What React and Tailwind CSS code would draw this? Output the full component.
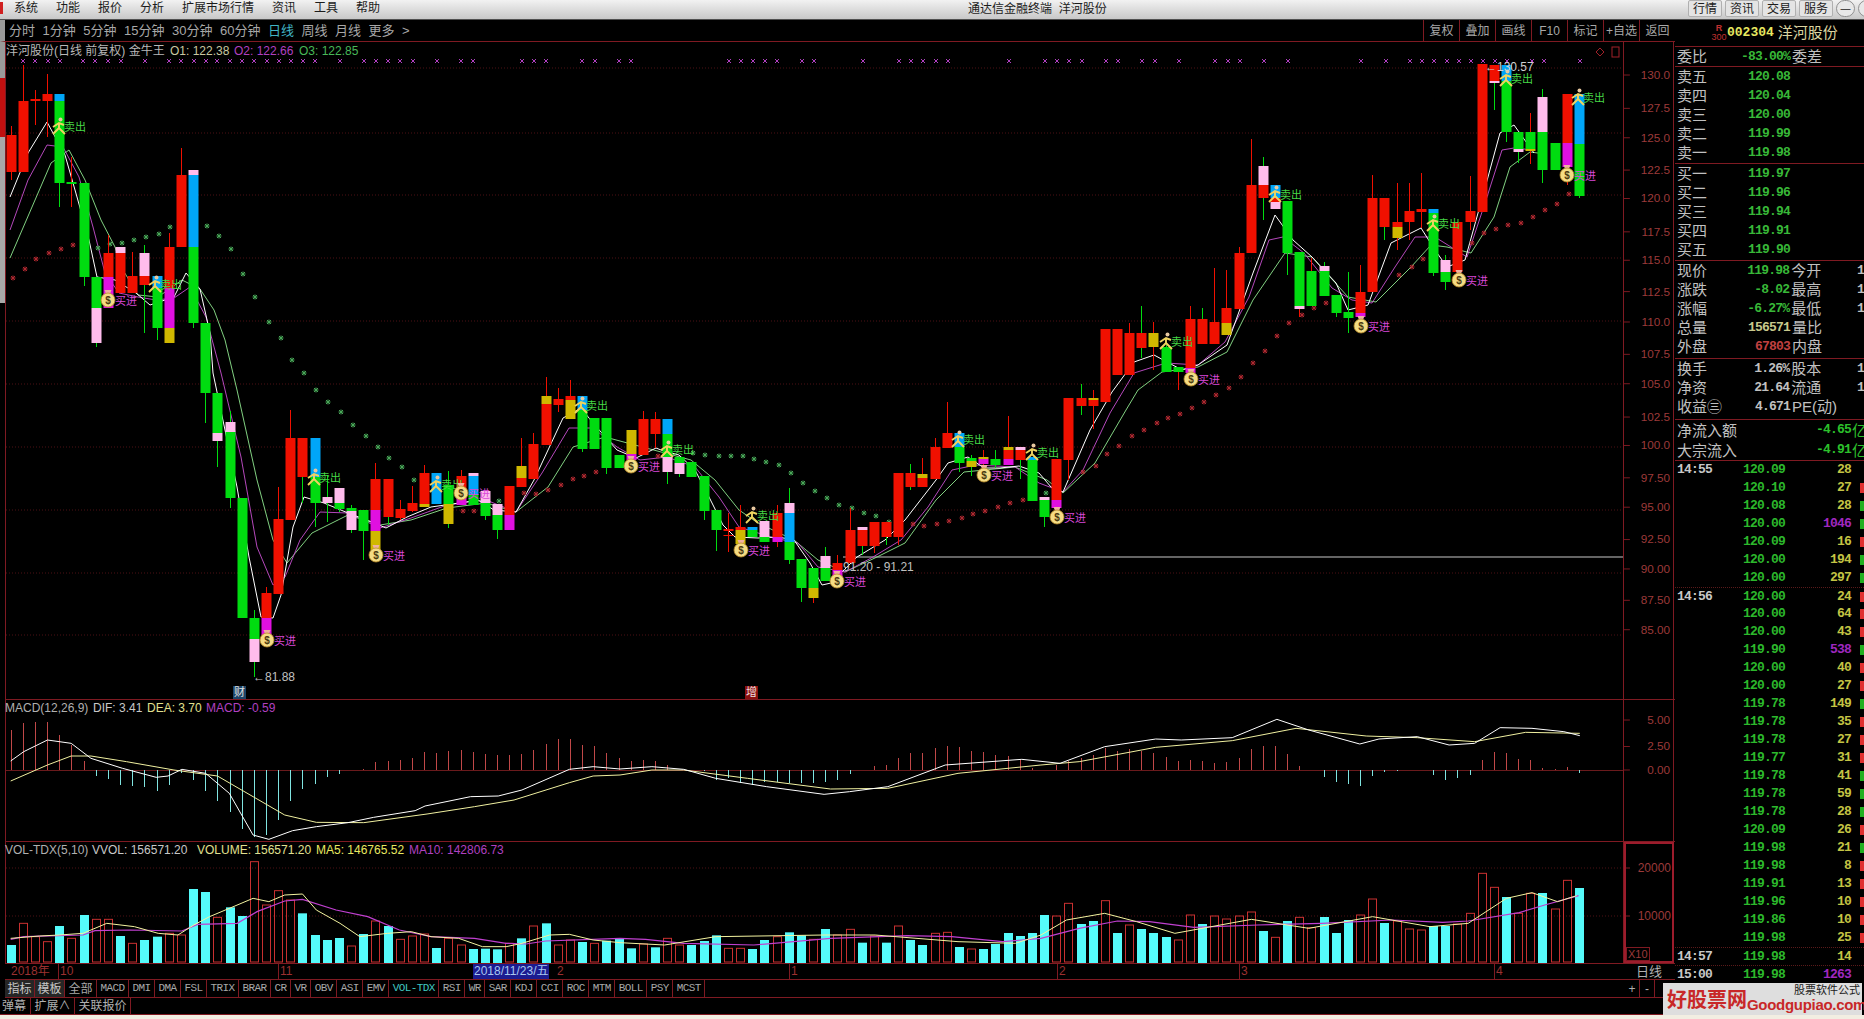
import React from 'react';

const RED_LINE = '#7f1a22';
const COLORS = { r: '#f01000', g: '#00dc10', b: '#00a6f8', p: '#ffbcec', m: '#e010e0', y: '#d0b800' };

const cx = (i) => 10.7 + 12.157 * i;

// [wickTop, wickBottom, wickColour, colour, from, to, colour, from, to ...]
const CANDLES = [
  [126, 180, 'r', 'r', 135, 172],
  [65, 172, 'r', 'r', 101, 172],
  [90, 125, 'r', 'r', 99, 101],
  [74, 137, 'r', 'r', 94, 101],
  [94, 207, 'g', 'b', 94, 101, 'g', 101, 183],
  [157, 207, 'r', 'g', 182, 184],
  [183, 286, 'g', 'g', 183, 277],
  [277, 347, 'g', 'g', 277, 308, 'p', 308, 343],
  [235, 308, 'r', 'r', 253, 277, 'm', 277, 308],
  [247, 293, 'r', 'p', 247, 253, 'r', 253, 293],
  [252, 293, 'r', 'r', 276, 293],
  [245, 333, 'g', 'p', 253, 276, 'r', 276, 285],
  [276, 340, 'g', 'b', 276, 288, 'g', 288, 328],
  [233, 343, 'r', 'r', 247, 288, 'm', 288, 328, 'y', 328, 343],
  [148, 247, 'r', 'r', 175, 247],
  [170, 328, 'g', 'p', 170, 175, 'b', 175, 247, 'g', 247, 323],
  [323, 423, 'g', 'g', 323, 393],
  [393, 467, 'g', 'g', 393, 433, 'p', 433, 441],
  [411, 508, 'g', 'p', 422, 432, 'g', 432, 498],
  [498, 618, 'g', 'g', 498, 618],
  [610, 677, 'g', 'g', 618, 639, 'p', 639, 662],
  [587, 635, 'r', 'r', 593, 618, 'm', 618, 635],
  [487, 594, 'r', 'r', 519, 594],
  [410, 520, 'r', 'r', 438, 520],
  [438, 503, 'g', 'r', 438, 477],
  [438, 527, 'g', 'b', 438, 477, 'g', 477, 503],
  [475, 522, 'g', 'p', 497, 503],
  [488, 512, 'g', 'p', 488, 503, 'g', 503, 509],
  [505, 533, 'g', 'g', 508, 511, 'p', 511, 530],
  [510, 560, 'g', 'g', 510, 531],
  [463, 550, 'r', 'r', 479, 510, 'm', 510, 531, 'y', 531, 550],
  [479, 525, 'g', 'r', 479, 517],
  [500, 520, 'r', 'r', 509, 518],
  [486, 512, 'r', 'r', 503, 511],
  [465, 507, 'r', 'r', 473, 504, 'y', 504, 507],
  [473, 504, 'g', 'b', 473, 504],
  [471, 528, 'g', 'g', 485, 504, 'y', 504, 524],
  [470, 505, 'r', 'r', 476, 498, 'm', 498, 505],
  [473, 505, 'g', 'p', 473, 476, 'b', 476, 495, 'g', 495, 505],
  [491, 520, 'g', 'p', 491, 503, 'g', 503, 516],
  [504, 539, 'g', 'p', 504, 515, 'g', 515, 530],
  [486, 530, 'r', 'r', 486, 515, 'm', 515, 530],
  [438, 487, 'r', 'y', 466, 478, 'r', 478, 487],
  [433, 479, 'r', 'r', 444, 479],
  [377, 445, 'r', 'y', 396, 404, 'r', 404, 445],
  [388, 412, 'r', 'r', 399, 405],
  [380, 419, 'r', 'r', 396, 400, 'y', 400, 419],
  [396, 452, 'g', 'b', 396, 410, 'g', 410, 449],
  [418, 449, 'g', 'g', 418, 449],
  [418, 474, 'g', 'g', 418, 468],
  [455, 468, 'g', 'g', 455, 468],
  [430, 460, 'g', 'y', 430, 454, 'm', 454, 460],
  [411, 455, 'r', 'r', 419, 455],
  [412, 448, 'r', 'r', 419, 434],
  [419, 484, 'g', 'b', 419, 434, 'g', 434, 457, 'p', 457, 472],
  [457, 477, 'g', 'g', 457, 463, 'p', 463, 474],
  [462, 477, 'g', 'g', 462, 477],
  [476, 520, 'g', 'g', 476, 511],
  [510, 551, 'g', 'g', 510, 530],
  [513, 552, 'r', 'r', 529, 531, 'r', 535, 536],
  [505, 544, 'r', 'r', 527, 530, 'y', 530, 544],
  [527, 537, 'g', 'b', 527, 530, 'g', 530, 537],
  [521, 542, 'g', 'p', 521, 537, 'g', 537, 542],
  [505, 547, 'r', 'r', 513, 537, 'm', 537, 542],
  [488, 564, 'g', 'p', 503, 513, 'b', 513, 542, 'g', 542, 560],
  [559, 602, 'g', 'g', 559, 588],
  [568, 603, 'r', 'g', 568, 588, 'y', 588, 598],
  [547, 581, 'g', 'p', 556, 568, 'g', 568, 581],
  [555, 578, 'r', 'r', 563, 570, 'm', 570, 578],
  [508, 563, 'r', 'r', 530, 563],
  [527, 555, 'g', 'p', 527, 530, 'r', 530, 546],
  [522, 553, 'r', 'r', 522, 546],
  [522, 545, 'g', 'r', 522, 537],
  [473, 545, 'r', 'r', 473, 537],
  [464, 490, 'g', 'r', 473, 487],
  [458, 487, 'r', 'y', 474, 478, 'r', 478, 487],
  [438, 479, 'r', 'r', 447, 479],
  [402, 448, 'r', 'r', 433, 448],
  [433, 472, 'g', 'b', 433, 447, 'g', 447, 463],
  [455, 476, 'g', 'g', 458, 461, 'y', 461, 467],
  [450, 472, 'r', 'y', 457, 459, 'm', 459, 464],
  [450, 468, 'g', 'g', 459, 465],
  [416, 465, 'r', 'y', 447, 450, 'r', 450, 459, 'm', 459, 465],
  [447, 479, 'g', 'p', 447, 450, 'r', 450, 460],
  [457, 501, 'g', 'b', 457, 460, 'g', 460, 501],
  [497, 527, 'g', 'p', 497, 500, 'g', 500, 517],
  [459, 508, 'r', 'r', 459, 500, 'm', 500, 508],
  [398, 480, 'r', 'r', 398, 460],
  [384, 415, 'g', 'r', 398, 406],
  [390, 429, 'r', 'y', 398, 400, 'r', 400, 406],
  [329, 402, 'r', 'r', 329, 402],
  [329, 375, 'r', 'r', 329, 375],
  [323, 375, 'r', 'r', 333, 375],
  [306, 358, 'g', 'r', 333, 348],
  [322, 370, 'r', 'y', 333, 347],
  [345, 372, 'g', 'g', 347, 372],
  [367, 390, 'r', 'g', 367, 372],
  [306, 373, 'r', 'r', 319, 368, 'm', 368, 373],
  [308, 344, 'g', 'r', 319, 344],
  [268, 344, 'r', 'r', 322, 344],
  [270, 335, 'r', 'r', 308, 323, 'y', 323, 335],
  [247, 309, 'r', 'r', 253, 309],
  [139, 253, 'r', 'r', 185, 253],
  [157, 220, 'g', 'p', 166, 185, 'r', 185, 198],
  [185, 209, 'g', 'b', 185, 198, 'r', 198, 202, 'p', 202, 209],
  [201, 275, 'g', 'g', 201, 253],
  [252, 317, 'r', 'g', 252, 306, 'p', 306, 309],
  [258, 306, 'r', 'g', 271, 306],
  [262, 296, 'g', 'p', 266, 271, 'g', 271, 296],
  [295, 317, 'g', 'g', 295, 313],
  [272, 333, 'g', 'g', 312, 318],
  [265, 317, 'r', 'r', 292, 313, 'm', 313, 317],
  [175, 292, 'r', 'r', 198, 292],
  [198, 240, 'g', 'r', 198, 227],
  [183, 250, 'r', 'r', 222, 227, 'y', 227, 238],
  [183, 240, 'r', 'r', 211, 222],
  [173, 228, 'r', 'r', 209, 212],
  [209, 276, 'g', 'b', 209, 213, 'g', 213, 273],
  [255, 290, 'g', 'p', 260, 272, 'g', 272, 282],
  [222, 272, 'r', 'r', 222, 272],
  [176, 230, 'r', 'r', 211, 222],
  [64, 212, 'r', 'r', 64, 212],
  [65, 110, 'g', 'r', 65, 81, 'p', 81, 83],
  [65, 142, 'g', 'b', 65, 81, 'g', 81, 132],
  [132, 163, 'g', 'g', 132, 149, 'p', 149, 152],
  [113, 164, 'r', 'g', 132, 149, 'y', 149, 151],
  [89, 183, 'g', 'p', 97, 132, 'g', 132, 170],
  [143, 170, 'g', 'g', 143, 170],
  [94, 185, 'r', 'r', 94, 143, 'm', 143, 167],
  [94, 198, 'g', 'b', 94, 144, 'g', 144, 196],
];

const MA_WHITE = [[10,197],[28,153],[47,122],[53,133],[65,155],[77,197],[89,240],[97,277],[115,280],[136,293],[150,305],[174,297],[186,273],[200,289],[210,333],[213,373],[237,487],[249,557],[261,617],[273,618],[281,595],[293,527],[304,497],[324,503],[348,513],[372,522],[386,528],[407,517],[431,507],[459,503],[478,500],[494,510],[516,512],[534,480],[563,418],[581,408],[593,423],[617,450],[636,458],[656,448],[661,450],[679,455],[695,470],[709,497],[723,525],[735,537],[758,538],[778,537],[794,540],[810,563],[822,585],[831,583],[857,557],[885,540],[905,520],[936,480],[948,463],[968,457],[984,468],[1000,468],[1019,466],[1039,473],[1051,487],[1063,492],[1090,430],[1112,392],[1134,362],[1154,355],[1182,370],[1198,365],[1227,345],[1253,273],[1275,215],[1293,240],[1312,257],[1336,283],[1348,310],[1368,305],[1391,243],[1421,228],[1435,250],[1447,267],[1465,260],[1488,177],[1500,133],[1514,125],[1534,153]];
const MA_PURPLE = [[10,230],[28,180],[47,145],[63,147],[79,177],[93,227],[105,273],[119,293],[138,297],[156,300],[174,298],[190,287],[206,317],[221,373],[241,457],[257,547],[273,585],[285,577],[300,540],[320,512],[348,513],[380,528],[411,518],[447,505],[486,500],[516,512],[542,473],[569,428],[593,428],[617,447],[640,460],[667,457],[695,467],[719,497],[739,527],[774,538],[798,543],[818,567],[845,572],[873,557],[901,540],[928,507],[952,470],[976,465],[1015,467],[1039,483],[1063,492],[1083,470],[1110,413],[1134,373],[1166,363],[1198,365],[1225,342],[1249,297],[1269,240],[1283,237],[1304,253],[1332,288],[1352,300],[1372,303],[1395,267],[1415,237],[1435,237],[1467,257],[1486,200],[1502,150],[1514,148],[1534,150]];
const MA_GREEN = [[10,258],[51,163],[69,150],[85,180],[101,220],[115,247],[123,270],[138,295],[158,297],[182,280],[200,289],[214,310],[225,340],[237,390],[257,480],[273,540],[287,563],[312,533],[348,515],[380,525],[411,520],[447,508],[486,503],[516,512],[548,487],[573,447],[605,437],[691,460],[715,480],[739,510],[758,523],[794,540],[818,560],[845,572],[877,557],[905,543],[936,500],[964,472],[1015,467],[1047,480],[1063,493],[1095,463],[1126,410],[1138,390],[1162,372],[1198,367],[1227,352],[1253,300],[1285,253],[1312,257],[1348,297],[1376,302],[1411,267],[1431,245],[1447,247],[1471,253],[1494,217],[1510,167],[1530,152],[1538,153]];

const STARS_RED = [[13,278],[25,269],[36,259],[49,253],[61,249],[73,245],[463,511],[474,511],[524,493],[536,494],[548,490],[561,485],[573,479],[584,476],[596,472],[658,456],[913,524],[924,526],[937,524],[949,521],[962,518],[973,514],[985,511],[998,507],[1010,503],[1023,500],[1083,472],[1096,466],[1107,454],[1119,446],[1132,436],[1144,430],[1157,423],[1168,418],[1180,414],[1192,408],[1204,402],[1216,395],[1229,388],[1241,377],[1253,363],[1265,351],[1277,336],[1289,323],[1302,315],[1314,308],[1326,303],[1399,275],[1412,267],[1423,259],[1472,243],[1484,233],[1496,229],[1508,225],[1521,223],[1533,217],[1545,210],[1557,204],[1569,194]];
const STARS_GREEN = [[98,248],[110,244],[122,243],[134,240],[146,237],[159,234],[170,227],[207,226],[219,236],[231,249],[243,274],[255,297],[269,322],[281,338],[292,360],[304,373],[316,390],[328,402],[341,412],[353,425],[366,436],[378,447],[389,458],[402,467],[414,480],[499,501],[693,453],[705,455],[719,456],[731,456],[743,456],[754,459],[766,462],[779,465],[791,473],[803,483],[815,491],[827,498],[839,505],[852,508],[864,513],[876,516],[889,522],[1046,493]];

const CROSS_X = [23,35,48,60,83,95,108,121,145,169,181,194,206,217,230,242,254,267,279,291,303,315,340,364,376,388,400,413,437,461,473,522,534,546,582,595,619,631,729,741,753,765,777,802,814,863,899,911,923,936,948,1009,1045,1057,1069,1082,1106,1118,1142,1155,1179,1215,1228,1240,1264,1288,1361,1386,1410,1422,1434,1447,1459,1471,1483,1495,1507,1532,1544,1580];

const SELL = [[60,126],[156,284],[315,477],[437,484],[582,405],[668,449],[753,515],[959,439],[1033,452],[1167,341],[1276,194],[1434,223],[1507,78],[1579,97]];
const BUY = [[108,300],[267,640],[376,555],[461,493],[631,466],[741,550],[837,581],[984,475],[1057,517],[1191,379],[1361,326],[1459,280],[1567,175]];

const MAIN_AXIS = [[130,'130.0',69],[127.5,'127.5',103],[125,'125.0',133],[122.5,'122.5',166],[120,'120.0',195],[117.5,'117.5',229],[115,'115.0',258],[112.5,'112.5',290],[110,'110.0',321],[107.5,'107.5',354],[105,'105.0',384],[102.5,'102.5',418],[100,'100.0',447],[97.5,'97.50',480],[95,'95.00',510],[92.5,'92.50',543],[90,'90.00',573],[87.5,'87.50',605],[85,'85.00',635]];
const MAIN_GRID = [68,133,195,258,321,384,447,510,573,635];

// macd histogram, height above (+) or below (-) the zero line
const HIST = [40,47,48,48,35,25,9,-6,-9,-15,-16,-17,-21,-15,-3,-10,-21,-31,-42,-59,-67,-65,-50,-31,-19,-14,-7,-4,0,1,8,9,10,12,18,17,19,20,18,16,15,15,16,20,26,31,31,25,24,17,12,9,10,9,5,0,0,-1,-10,-8,-13,-15,-12,-12,-13,-13,-13,-12,-10,-4,0,4,5,12,17,17,22,24,23,19,18,15,14,10,2,0,5,9,12,15,22,19,21,19,17,13,9,10,9,7,8,12,21,24,24,16,4,0,-7,-12,-14,-16,-6,-2,-1,0,0,-5,-10,-8,-5,10,18,17,11,10,2,1,3,-3];

const fromLeft = (pts) => pts.map(([x, y]) => [x / 2.529, 690 + y / 3]);
const fromRight = (pts) => pts.map(([x, y]) => [620 + x / 1.568, 690 + y / 3]);

const DIF = [...fromLeft([[27,213],[60,185],[120,150],[180,160],[230,205],[310,235],[395,262],[425,258],[460,238],[520,250],[580,310],[640,435],[680,448],[740,422],[800,410],[880,398],[945,382],[1050,362],[1075,348],[1190,320],[1260,318],[1320,300],[1440,238],[1500,230],[1568,237]]), ...fromRight([[50,230],[100,238],[150,265],[230,290],[320,313],[360,305],[420,290],[510,225],[630,208],[690,220],[760,170],[840,147],[880,150],[960,143],[1030,88],[1080,120],[1160,162],[1190,147],[1250,140],[1300,165],[1340,160],[1380,113],[1430,115],[1480,125],[1505,137]])];
const DEA = [...fromLeft([[27,273],[120,225],[180,198],[230,198],[320,215],[440,240],[550,258],[640,320],[720,375],[800,397],[920,398],[1080,372],[1200,350],[1300,330],[1440,278],[1500,258],[1568,255]]), ...fromRight([[50,240],[100,240],[200,265],[330,297],[420,295],[530,250],[660,225],[720,215],[840,172],[960,152],[1060,115],[1170,138],[1250,143],[1340,155],[1420,127],[1505,130]])];

// volume bars: 1 = hollow red, 0 = cyan, second number is the top in crop rows
const VOL = [[0,765],[1,700],[1,740],[1,755],[0,708],[1,745],[0,675],[1,688],[1,688],[0,738],[1,760],[0,750],[0,740],[1,730],[1,735],[0,597],[0,606],[1,682],[0,652],[0,678],[1,515],[1,645],[1,602],[1,630],[0,670],[0,735],[0,750],[0,744],[1,768],[0,732],[1,693],[0,708],[1,748],[1,738],[1,732],[0,774],[1,745],[1,765],[0,777],[0,776],[0,778],[1,760],[0,745],[1,708],[0,700],[1,765],[1,750],[0,756],[1,760],[0,752],[0,745],[0,775],[1,762],[0,772],[1,745],[1,765],[0,765],[0,753],[0,736],[1,775],[1,775],[0,777],[0,750],[1,740],[0,727],[0,736],[1,748],[0,717],[1,735],[1,718],[0,758],[1,738],[0,758],[1,708],[0,750],[0,765],[1,730],[1,727],[0,771],[1,777],[0,777],[0,762],[0,729],[0,738],[0,729],[0,675],[1,678],[1,640],[0,702],[0,693],[1,632],[0,729],[1,705],[0,717],[0,729],[0,741],[1,750],[1,675],[0,702],[1,678],[1,687],[1,678],[1,666],[0,723],[1,742],[0,693],[1,682],[1,713],[0,681],[0,729],[0,690],[1,675],[1,627],[0,699],[1,693],[1,717],[1,720],[0,708],[0,708],[1,702],[1,670],[1,550],[1,592],[0,621],[1,670],[1,610],[0,609],[1,657],[1,571],[0,594]];

const VOL_MA5 = [...fromLeft([[27,745],[100,738],[150,735],[210,730],[270,700],[340,710],[400,730],[450,735],[490,705],[530,680],[640,625],[680,635],[720,615],[765,612],[800,660],[860,700],[910,740],[980,730],[1040,725],[1090,740],[1160,745],[1220,770],[1280,770],[1320,760],[1390,735],[1440,733],[1500,750],[1568,758]]), ...fromRight([[70,765],[150,740],[320,735],[400,735],[530,755],[620,760],[660,735],[700,690],[760,670],[810,695],[870,730],[990,688],[1080,715],[1180,680],[1270,710],[1330,700],[1390,625],[1430,608],[1470,635],[1500,617]])];
const VOL_MA10 = [...fromLeft([[27,748],[60,740],[210,735],[240,722],[330,720],[460,723],[500,703],[600,700],[650,665],[720,633],[765,628],[850,660],[930,680],[1010,720],[1090,740],[1200,745],[1280,760],[1330,762],[1380,753],[1568,745]]), ...fromRight([[40,748],[100,760],[210,765],[330,745],[450,737],[520,740],[600,755],[660,745],[720,715],[780,693],[830,695],[900,712],[1000,705],[1100,700],[1210,690],[1290,697],[1330,693],[1410,668],[1450,645],[1503,617]])];

const TRADES = [
  ['14:55','120.09','28','y',''],['','120.10','27','y','r'],['','120.08','28','y','g'],['','120.00','1046','m','g'],['','120.09','16','y','r'],['','120.00','194','y','g'],['','120.00','297','y','g'],
  ['14:56','120.00','24','y','r'],['','120.00','64','y','r'],['','120.00','43','y','r'],['','119.90','538','m','g'],['','120.00','40','y','r'],['','120.00','27','y','r'],['','119.78','149','y','g'],['','119.78','35','y','r'],['','119.78','27','y','r'],['','119.77','31','y','r'],['','119.78','41','y','g'],['','119.78','59','y','g'],['','119.78','28','y','g'],['','120.09','26','y','r'],['','119.98','21','y','g'],['','119.98','8','y','r'],['','119.91','13','y','r'],['','119.96','10','y','r'],['','119.86','10','y','r'],['','119.98','25','y','r'],
  ['14:57','119.98','14','y',''],['15:00','119.98','1263','m',''],
];

const toPoints = (pts) => pts.map((p) => p.join(',')).join(' ');

const Candle = ({ data, i }) => {
  const x = Math.round(cx(i));
  const [top, bottom, wick, ...rest] = data;
  const bodies = [];
  for (let k = 0; k < rest.length; k += 3) bodies.push(rest.slice(k, k + 3));
  return (
    <g>
      <line x1={x + 0.5} x2={x + 0.5} y1={top} y2={bottom} stroke={COLORS[wick]} />
      {bodies.map(([c, a, b], n) => (
        <rect key={n} x={x - 4.5} y={a} width={10} height={b - a} fill={COLORS[c]} />
      ))}
    </g>
  );
};

const Star = ({ x, y, color }) => (
  <path d={`M${x - 2.5} ${y}H${x + 2.5}M${x} ${y - 2.5}V${y + 2.5}M${x - 2} ${y - 2}L${x + 2} ${y + 2}M${x + 2} ${y - 2}L${x - 2} ${y + 2}`} stroke={color} strokeWidth="1" />
);

const SellMark = ({ x, y }) => (
  <g>
    <path d={`M${x - 7} ${y + 1}L${x - 1} ${y - 3}L${x + 4} ${y - 1}M${x - 1} ${y - 3}L${x - 1} ${y + 2}L${x - 7} ${y + 8}M${x - 1} ${y + 2}L${x + 5} ${y + 8}`} stroke="#f0d460" strokeWidth="1.9" fill="none" />
    <circle cx={x + 0.5} cy={y - 6.5} r="2" fill="#e8c8a0" />
    <text x={x + 4} y={y + 5} fontSize="11" fill="#46d846">卖出</text>
  </g>
);

const BuyMark = ({ x, y }) => (
  <g>
    <path d={`M${x - 3.5} ${y - 10}L${x + 3.5} ${y - 10}L${x + 1.5} ${y - 5}L${x - 1.5} ${y - 5}Z`} fill="#f0b0a0" />
    <circle cx={x} cy={y} r="7" fill="#f4dc84" stroke="#b88a28" strokeWidth="0.8" />
    <text x={x} y={y + 3.5} fontSize="10" fontWeight="700" textAnchor="middle" fill="#4a3a10">$</text>
    <text x={x + 7} y={y + 5} fontSize="11" fill="#d848d8">买进</text>
  </g>
);

const AxisLabel = ({ y, text }) => (
  <g>
    <line x1="1624" x2="1630" y1={y} y2={y} stroke={RED_LINE} />
    <text x="1671" y={y + 4} fontSize="12" textAnchor="end" fill="#9c3a3a">{text}</text>
  </g>
);

const GridLine = ({ y }) => (
  <line x1="6" x2="1623" y1={y} y2={y} stroke="#4c1014" strokeDasharray="1 2" />
);

const MainPlot = () => (
  <svg width="1618" height="657" viewBox="6 42 1618 657" className="block">
    {MAIN_GRID.map((y) => <GridLine key={y} y={y} />)}
    {CROSS_X.map((x) => (
      <path key={x} d={`M${x - 2} 59L${x + 2} 63M${x + 2} 59L${x - 2} 63`} stroke="#b040c0" fill="none" />
    ))}
    <line x1="843" x2="1623" y1="557" y2="557" stroke="#c8c8c8" />
    <polyline points={toPoints(MA_GREEN)} fill="none" stroke="#90e890" strokeWidth="0.9" />
    <polyline points={toPoints(MA_PURPLE)} fill="none" stroke="#c850d0" strokeWidth="0.9" />
    <polyline points={toPoints(MA_WHITE)} fill="none" stroke="#ffffff" />
    {STARS_RED.map(([x, y]) => <Star key={x} x={x} y={y} color="#b02830" />)}
    {STARS_GREEN.map(([x, y]) => <Star key={x} x={x} y={y} color="#48a858" />)}
    {CANDLES.map((c, i) => <Candle key={i} data={c} i={i} />)}
    {SELL.map(([x, y]) => <SellMark key={x} x={x} y={y} />)}
    {BUY.map(([x, y]) => <BuyMark key={x} x={x} y={y} />)}
    <text x="253" y="681" fontSize="12" fill="#c0c0c0">←81.88</text>
    <text x="1485" y="71" fontSize="12" fill="#d0d0d0">←130.57</text>
    <text x="843" y="571" fontSize="12" fill="#c0c0c0">91.20 - 91.21</text>
    <path d="M1600 48L1604 52L1600 56L1596 52Z" fill="none" stroke="#a02028" />
    <rect x="1612" y="47" width="7" height="10" fill="none" stroke="#a02028" />
  </svg>
);

const MacdPlot = () => (
  <svg width="1618" height="141" viewBox="6 700 1618 141" className="block">
    <line x1="6" x2="1623" y1="770.5" y2="770.5" stroke="#6a1a1c" />
    {HIST.map((h, i) => {
      const x = Math.round(cx(i)) + 0.5;
      return <line key={i} x1={x} x2={x} y1="770" y2={770 - h} stroke={h > 0 ? '#c04848' : '#80e4e0'} />;
    })}
    <polyline points={toPoints(DEA)} fill="none" stroke="#f0f0a0" />
    <polyline points={toPoints(DIF)} fill="none" stroke="#ffffff" />
  </svg>
);

const VolPlot = () => (
  <svg width="1618" height="121" viewBox="6 842 1618 121" className="block">
    <GridLine y={868} />
    <GridLine y={916} />
    {VOL.map(([up, z], i) => {
      const x = Math.round(cx(i));
      const top = 690 + z / 3;
      return up ? (
        <rect key={i} x={x - 3.5} y={top} width="8" height={962 - top} fill="none" stroke="#c83030" />
      ) : (
        <rect key={i} x={x - 4} y={top} width="9" height={963 - top} fill="#55fbfb" />
      );
    })}
    <polyline points={toPoints(VOL_MA10)} fill="none" stroke="#c040d0" strokeWidth="1.2" />
    <polyline points={toPoints(VOL_MA5)} fill="none" stroke="#f4f4a0" />
  </svg>
);

const Legend = ({ items }) => (
  <div className="absolute left-0 top-0 flex whitespace-nowrap">
    {items.map(([text, color, left]) => (
      <span key={text} className={`absolute ${color}`} style={{ left }}>{text}</span>
    ))}
  </div>
);

const Toolbar = () => {
  const left = ['分时', '1分钟', '5分钟', '15分钟', '30分钟', '60分钟', '日线', '周线', '月线', '更多', '>'];
  const right = ['复权', '叠加', '画线', 'F10', '标记', '+自选', '返回'];
  return (
    <div className="flex h-[22px] items-center justify-between border-b border-l-[5px] border-b-[#7f1a22] border-l-[#9a9a9a] text-[13px] text-[#a8a8a8]">
      <div className="flex items-center gap-[7.5px] pl-[4px]">
        {left.map((t) => (
          <span key={t} className={t === '日线' ? 'text-[#40b4c4]' : ''}>{t}</span>
        ))}
      </div>
      <div className="flex h-full">
        {right.map((t) => (
          <span key={t} className="flex w-[36px] items-center justify-center border-l border-[#7f1a22] text-[12px]">{t}</span>
        ))}
      </div>
    </div>
  );
};

const Tabs = () => {
  const tabs = ['MACD', 'DMI', 'DMA', 'FSL', 'TRIX', 'BRAR', 'CR', 'VR', 'OBV', 'ASI', 'EMV', 'VOL-TDX', 'RSI', 'WR', 'SAR', 'KDJ', 'CCI', 'ROC', 'MTM', 'BOLL', 'PSY', 'MCST'];
  return (
    <div className="ml-[5px] flex h-[18px] border-b border-[#7f1a22] text-[#a8a8a8]">
      {['指标', '模板'].map((t) => (
        <span key={t} className="flex w-[30px] items-center justify-center border-r border-[#7f1a22] bg-[#262626] text-[12px] text-[#c8c8c8]">{t}</span>
      ))}
      <span className="flex w-[32px] items-center justify-center border-r border-[#7f1a22] text-[12px]">全部</span>
      {tabs.map((t) => (
        <span
          key={t}
          className={`flex items-center border-r border-[#7f1a22] px-[3.5px] font-['Liberation_Mono',monospace] text-[11px] tracking-[-0.6px] ${t === 'VOL-TDX' ? 'text-[#40c8c0]' : ''}`}
        >
          {t}
        </span>
      ))}
    </div>
  );
};

const MonoBold = "font-['Liberation_Mono','Noto_Sans_CJK_SC',monospace] font-bold text-[13px] tracking-[-0.8px]";

const Quote = ({ label, value, color = 'text-[#38b838]', label2, extra }) => (
  <div className="flex h-[19px] items-center whitespace-nowrap">
    <div className="flex w-[115px] items-center justify-between pl-[2px]">
      <span className="text-[15px] leading-none text-[#c0c0c0]">{label}</span>
      <span className={`${MonoBold} ${color}`}>{value}</span>
    </div>
    {label2 && <span className="w-[68px] pl-[2px] text-[15px] leading-none text-[#c0c0c0]">{label2}</span>}
    {extra && <span className={`${MonoBold} text-[#c0c0c0]`}>{extra}</span>}
  </div>
);

const TradeRow = ({ row, dotted }) => {
  const [time, price, vol, kind, side] = row;
  return (
    <div className={`flex h-[18px] items-center whitespace-nowrap ${MonoBold} ${dotted ? 'border-t border-dotted border-[#5a1a1a]' : ''}`}>
      <span className="w-[68px] pl-[2px] text-[#c8c8c8]">{time}</span>
      <span className="w-[50px] text-[#2cb82c]">{price}</span>
      <span className={`w-[58px] text-right ${kind === 'm' ? 'text-[#a028c0]' : 'text-[#c4c444]'}`}>{vol}</span>
      {side && <span className={`ml-[9px] h-[10px] w-[4px] ${side === 'r' ? 'bg-[#e03030]' : 'bg-[#20b020]'}`} />}
    </div>
  );
};

const Section = ({ className, children }) => (
  <div className={`border-b border-[#7f1a22] ${className}`}>{children}</div>
);

const QuotePanel = () => (
  <div className="w-[189px] overflow-hidden bg-black">
    <Section className="flex h-[27px] items-center pl-[36px]">
      <span className="flex w-[16px] flex-col items-center text-[9px] leading-[9px] text-[#c03030]">
        <b>R</b>
        <span>300</span>
      </span>
      <span className="font-['Liberation_Mono',monospace] text-[13px] font-bold text-[#e8e860]">002304</span>
      <span className="ml-[4px] text-[15px] text-[#dcd4a0]">洋河股份</span>
    </Section>
    <Section className="h-[20px]">
      <Quote label="委比" value="-83.00%" label2="委差" />
    </Section>
    <Section className="h-[97px]">
      {[['卖五', '120.08'], ['卖四', '120.04'], ['卖三', '120.00'], ['卖二', '119.99'], ['卖一', '119.98']].map(([l, v]) => (
        <Quote key={l} label={l} value={v} />
      ))}
    </Section>
    <Section className="h-[97px]">
      {[['买一', '119.97'], ['买二', '119.96'], ['买三', '119.94'], ['买四', '119.91'], ['买五', '119.90']].map(([l, v]) => (
        <Quote key={l} label={l} value={v} />
      ))}
    </Section>
    <Section className="h-[98px]">
      <Quote label="现价" value="119.98" label2="今开" extra="1" />
      <Quote label="涨跌" value="-8.02" label2="最高" extra="1" />
      <Quote label="涨幅" value="-6.27%" label2="最低" extra="1" />
      <Quote label="总量" value="156571" color="text-[#c8c88c]" label2="量比" />
      <Quote label="外盘" value="67803" color="text-[#c04040]" label2="内盘" />
    </Section>
    <Section className="h-[61px]">
      <Quote label="换手" value="1.26%" color="text-[#c0c0c0]" label2="股本" extra="1" />
      <Quote label="净资" value="21.64" color="text-[#c0c0c0]" label2="流通" extra="1" />
      <Quote label="收益㊂" value="4.671" color="text-[#c0c0c0]" label2="PE(动)" />
    </Section>
    <Section className="h-[41px] text-[15px] text-[#c0c0c0]">
      {[['净流入额', '-4.65'], ['大宗流入', '-4.91']].map(([l, v]) => (
        <div key={l} className="flex h-[20px] items-center justify-between whitespace-nowrap pl-[2px]">
          <span className="leading-none">{l}</span>
          <span className="flex w-[48px] items-center">
            <span className={`${MonoBold} text-[#2cc02c]`}>{v}</span>
            <span className="ml-[1px] leading-none text-[#2cc02c]">亿</span>
          </span>
        </div>
      ))}
    </Section>
    <div>
      {TRADES.map((row, i) => (
        <TradeRow key={i} row={row} dotted={i === 7 || i === 27 || i === 28} />
      ))}
    </div>
  </div>
);

// sliver of the window behind, visible along the left edge
const LeftStrip = () => (
  <div className="flex w-[5px] flex-col">
    <div className="h-[36px] bg-[#9a9a9a]" />
    <div className="h-[59px] bg-[#c01010]" />
    <div className="h-[166px] bg-[#a8a8a8]" />
    <div className="flex-1 bg-black" />
  </div>
);

export default function App() {
  return (
    <div className="relative flex h-[1019px] w-[1864px] flex-col overflow-hidden bg-black font-['Liberation_Sans','Noto_Sans_CJK_SC',sans-serif]">
      {/* menu bar */}
      <div className="relative flex h-[20px] shrink-0 items-center border-b border-[#505050] bg-gradient-to-b from-[#f2f2f2] to-[#c8c8c8] pb-[4px] text-[12px] text-[#1c1c1c]">
        <span className="mr-[11px] h-[12px] w-[3px] bg-[#d02020]" />
        <div className="flex gap-[18px]">
          {['系统', '功能', '报价', '分析', '扩展市场行情', '资讯', '工具', '帮助'].map((t) => <span key={t}>{t}</span>)}
        </div>
        <span className="absolute left-[968px] top-0 whitespace-pre">通达信金融终端  洋河股份</span>
        <div className="absolute left-[1688px] top-0 flex items-center gap-[3px]">
          {['行情', '资讯', '交易', '服务'].map((t) => (
            <span key={t} className="flex h-[17px] w-[34px] items-center justify-center rounded-[2px] border border-[#b0b0b0] bg-[#e4e4e4]">{t}</span>
          ))}
          <span className="flex h-[17px] w-[19px] items-center justify-center rounded-full border border-[#909090] bg-[#e8e8e8] text-[10px]">—</span>
          <span className="h-[17px] w-[19px] rounded-full border border-[#909090] bg-[#e8e8e8]" />
        </div>
      </div>

      <div className="flex h-[995px] shrink-0">
        <div className="flex w-[1675px] flex-col">
          <Toolbar />

          <div className="flex h-[922px]">
            <LeftStrip />
            <div className="w-[1670px] border-l border-[#7f1a22]">
              {/* price pane */}
              <div className="flex h-[658px] border-b border-[#7f1a22]">
                <div className="relative w-[1618px] border-r border-[#7f1a22] text-[12px] leading-[18px]">
                  <MainPlot />
                  <Legend
                    items={[
                      ['洋河股份(日线 前复权) 金牛王', 'text-[#b8b8b8]', 0],
                      ['O1: 122.38', 'text-[#c8c8a0]', 164],
                      ['O2: 122.66', 'text-[#b040c0]', 228],
                      ['O3: 122.85', 'text-[#48b858]', 293],
                    ]}
                  />
                  <span className="absolute left-[227px] top-[644px] bg-[#1c4468] px-[1px] text-[11px] leading-[13px] text-[#e0e0e0]">财</span>
                  <span className="absolute left-[739px] top-[644px] bg-[#8c1010] px-[1px] text-[11px] leading-[13px] text-[#f0e0e0]">增</span>
                </div>
                <svg width="50" height="657" viewBox="1624 42 50 657" className="block border-r border-[#7f1a22]">
                  {MAIN_AXIS.map(([p, t, y]) => <AxisLabel key={p} y={y} text={t} />)}
                </svg>
              </div>

              {/* macd pane */}
              <div className="flex h-[142px] border-b border-[#7f1a22]">
                <div className="relative w-[1618px] border-r border-[#7f1a22] text-[12px] leading-[16px]">
                  <MacdPlot />
                  <Legend
                    items={[
                      ['MACD(12,26,9)', 'text-[#b0b0b0]', -1],
                      ['DIF: 3.41', 'text-[#c8c8c8]', 87],
                      ['DEA: 3.70', 'text-[#e0e090]', 141],
                      ['MACD: -0.59', 'text-[#b040c0]', 200],
                    ]}
                  />
                </div>
                <svg width="50" height="141" viewBox="1624 700 50 141" className="block border-r border-[#7f1a22]">
                  <AxisLabel y={719} text="5.00" />
                  <AxisLabel y={746} text="2.50" />
                  <AxisLabel y={770} text="0.00" />
                </svg>
              </div>

              {/* volume pane */}
              <div className="flex h-[122px] border-b border-[#7f1a22]">
                <div className="relative w-[1618px] border-r border-[#7f1a22] text-[12px] leading-[16px]">
                  <VolPlot />
                  <Legend
                    items={[
                      ['VOL-TDX(5,10)', 'text-[#b0b0b0]', -1],
                      ['VVOL: 156571.20', 'text-[#c8c8c8]', 86],
                      ['VOLUME: 156571.20', 'text-[#e0e090]', 191],
                      ['MA5: 146765.52', 'text-[#e8e860]', 310],
                      ['MA10: 142806.73', 'text-[#b040c0]', 403],
                    ]}
                  />
                </div>
                <div className="relative w-[50px] border-2 border-[#9c1c2c]">
                  <svg width="46" height="117" viewBox="1626 844 46 117" className="block">
                    <line x1="1626" x2="1630" y1="868" y2="868" stroke={RED_LINE} />
                    <line x1="1626" x2="1630" y1="916" y2="916" stroke={RED_LINE} />
                    <text x="1671" y="872" fontSize="12" textAnchor="end" fill="#9c3a3a">20000</text>
                    <text x="1671" y="920" fontSize="12" textAnchor="end" fill="#9c3a3a">10000</text>
                  </svg>
                  <span className="absolute bottom-0 left-0 border border-[#7f1a22] px-[1px] text-[11px] leading-[12px] text-[#9c3a3a]">X10</span>
                </div>
              </div>
            </div>
          </div>

          {/* date axis */}
          <div className="relative ml-[5px] h-[16px] border-b border-[#7f1a22] text-[12px] leading-[15px] text-[#9c3030]">
            <span className="absolute left-[6px]">2018年</span>
            <span className="absolute left-[53px] border-l border-[#7f1a22] pl-[1px]">10</span>
            <span className="absolute left-[273px] border-l border-[#7f1a22] pl-[1px]">11</span>
            <span className="absolute left-[468px] bg-[#1c1c90] pl-[1px] text-[#a8c8f0]">2018/11/23/五</span>
            <span className="absolute left-[552px]">2</span>
            <span className="absolute left-[784px] border-l border-[#7f1a22] pl-[1px]">1</span>
            <span className="absolute left-[1052px] border-l border-[#7f1a22] pl-[1px]">2</span>
            <span className="absolute left-[1234px] border-l border-[#7f1a22] pl-[1px]">3</span>
            <span className="absolute left-[1489px] border-l border-[#7f1a22] pl-[1px]">4</span>
            <span className="absolute left-[1631px] text-[13px] text-[#b0b0b0]">日线</span>
          </div>

          <div className="relative">
            <Tabs />
            <div className="absolute left-[1625px] top-0 flex h-[17px] items-center text-[12px] text-[#b0b0b0]">
              <span className="w-[15px] border-r border-[#7f1a22] text-center">+</span>
              <span className="w-[15px] border-r border-[#7f1a22] text-center">-</span>
            </div>
          </div>

          <div className="flex h-[17px] border-b border-[#7f1a22] text-[12px] text-[#b0b0b0]">
            <span className="flex w-[31px] items-center border-r border-[#7f1a22] pl-[2px]">弹幕</span>
            <span className="flex w-[44px] items-center justify-center border-r border-[#7f1a22]">扩展∧</span>
            <span className="flex w-[56px] items-center justify-center border-r border-[#7f1a22]">关联报价</span>
          </div>
        </div>

        <QuotePanel />
      </div>

      <div className="h-[4px] bg-[#f2eee2]" />

      {/* watermark */}
      <div className="absolute left-[1663px] top-[983px] h-[32px] w-[199px] bg-[#dedede]">
        <span className="absolute left-[4px] top-[2px] text-[20px] font-bold leading-[30px] text-[#c82828]">好股票网</span>
        <span className="absolute left-[131px] top-0 text-[11px] leading-[14px] text-[#202020]">股票软件公式</span>
        <span className="absolute left-[84px] top-[12px] text-[15px] font-bold leading-[20px] tracking-[-0.3px] text-[#c82828]">Goodgupiao.com</span>
      </div>
    </div>
  );
}
